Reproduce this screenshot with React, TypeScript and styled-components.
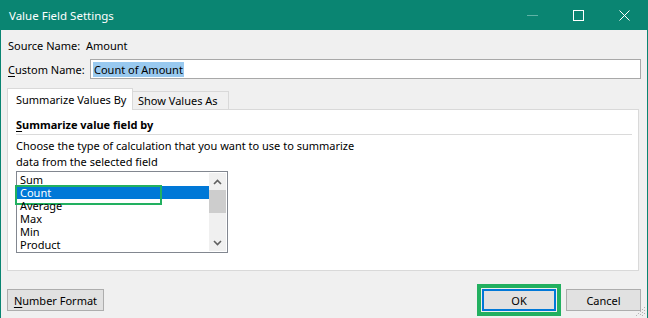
import styled, { createGlobalStyle } from "styled-components";

const TEAL = "#0a8572";
const GREEN = "#22b060";

const GlobalStyle = createGlobalStyle`
  html, body { margin: 0; padding: 0; background: #f0f0f0; }
  body {
    font-family: "Noto Sans", "Open Sans", sans-serif;
    font-size: 11px;
    color: #000;
  }
  * { box-sizing: border-box; }
`;

const Window = styled.div`
  position: relative;
  width: 648px;
  height: 318px;
  display: flex;
  flex-direction: column;
  background: #f0f0f0;
  border-left: 1px solid ${TEAL};
  border-right: 1px solid ${TEAL};
  overflow: hidden;
`;

const TitleBar = styled.div`
  height: 30px;
  flex: none;
  display: flex;
  align-items: center;
  padding-left: 8px;
  background: ${TEAL};
  color: #fff;
  font-size: 11.5px;
`;

const Controls = styled.div`
  margin-left: auto;
  display: flex;
  height: 100%;
`;

const CtrlButton = styled.div`
  width: 46px;
  height: 100%;
  display: flex;
  align-items: center;
  justify-content: center;
`;

const Body = styled.div`
  flex: 1;
  display: flex;
  flex-direction: column;
  padding: 0 6px;
`;

const Row = styled.div<{ top: number; h: number }>`
  display: flex;
  align-items: center;
  height: ${({ h }) => h}px;
  margin-top: ${({ top }) => top}px;
`;

const Label = styled.span<{ w: number }>`
  width: ${({ w }) => w}px;
  padding-left: 1px;
  flex: none;
  white-space: nowrap;
`;

const Key = styled.span`
  text-decoration: underline;
  text-underline-offset: 2px;
`;

const TextInput = styled.div`
  flex: 1;
  height: 20px;
  display: flex;
  align-items: center;
  padding-left: 2px;
  background: #fff;
  border: 1px solid #a8a8a8;
`;

const Selected = styled.span`
  background: #99c9ef;
  line-height: 15px;
  padding: 0 1px;
`;

const TabStrip = styled.div`
  display: flex;
  align-items: flex-end;
  height: 22px;
  margin-top: 9px;
  margin-bottom: -1px;
`;

const Tab = styled.div<{ active?: boolean }>`
  position: relative;
  z-index: 1;
  display: flex;
  align-items: center;
  white-space: nowrap;
  border: 1px solid #d9d9d9;
  ${({ active }) =>
    active
      ? `width: 126px; height: 22px; padding-left: 8px; background: #fff; border-bottom: none;`
      : `width: 96px; height: 19px; padding-left: 5px; background: #f0f0f0; border-left: none;`}
`;

const Panel = styled.div`
  height: 162px;
  margin-right: 2px;
  display: flex;
  flex-direction: column;
  padding: 0 6px 0 8px;
  background: #fff;
  border: 1px solid #d9d9d9;
`;

const Heading = styled.div`
  height: 16px;
  margin-top: 7px;
  line-height: 16px;
  font-weight: 700;
`;

const Separator = styled.div`
  height: 1px;
  margin-top: 1px;
  background: #dadada;
`;

const Description = styled.div`
  margin-top: 3px;
  line-height: 16px;
`;

const ListBox = styled.div`
  width: 212px;
  height: 82px;
  margin-top: 1px;
  display: flex;
  background: #fff;
  border: 1px solid #828790;
`;

const Items = styled.div`
  flex: 1;
  padding-top: 1px;
`;

const Item = styled.div<{ selected?: boolean }>`
  position: relative;
  height: 13px;
  line-height: 13px;
  padding-left: 3px;
  ${({ selected }) =>
    selected &&
    `
    background: #0078d7;
    color: #fff;
    &::after {
      content: "";
      position: absolute;
      left: -2px;
      top: -1px;
      width: 143px;
      height: 16px;
      border: 2px solid ${GREEN};
    }
  `}
`;

const ScrollBar = styled.div`
  width: 17px;
  margin: 1px 1px 1px 0;
  display: flex;
  flex-direction: column;
  background: #f0f0f0;
`;

const Arrow = styled.div`
  height: 17px;
  display: flex;
  align-items: center;
  justify-content: center;
`;

const Thumb = styled.div`
  height: 23px;
  background: #cdcdcd;
`;

const Track = styled.div`
  flex: 1;
`;

const Footer = styled.div`
  display: flex;
  gap: 10px;
  margin-top: 18px;
`;

const Button = styled.div<{ w: number; primary?: boolean }>`
  position: relative;
  width: ${({ w }) => w}px;
  height: 22px;
  display: flex;
  align-items: center;
  justify-content: center;
  background: #e1e1e1;
  border: ${({ primary }) => (primary ? "2px solid #0078d7" : "1px solid #adadad")};
  ${({ primary }) =>
    primary && `outline: 4px solid ${GREEN}; outline-offset: 1px;`}
`;

const Spacer = styled.div`
  flex: 1;
`;

const Grip = styled.svg`
  position: absolute;
  right: 1px;
  bottom: 1px;
`;

const Chevron = ({ up }: { up?: boolean }) => (
  <svg width="9" height="6" viewBox="0 0 9 6">
    <path
      d={up ? "M1 5 L4.5 1.5 L8 5" : "M1 1 L4.5 4.5 L8 1"}
      fill="none"
      stroke="#606060"
      strokeWidth="1.6"
    />
  </svg>
);

const items = ["Sum", "Count", "Average", "Max", "Min", "Product"];

export default function App() {
  return (
    <>
      <GlobalStyle />
      <Window>
        <TitleBar>
          Value Field Settings
          <Controls>
            <CtrlButton>
              <svg width="11" height="11" viewBox="0 0 11 11">
                <path d="M0 5.5 H11" stroke="#5fb3a6" strokeWidth="1" />
              </svg>
            </CtrlButton>
            <CtrlButton>
              <svg width="11" height="11" viewBox="0 0 11 11">
                <rect x="0.5" y="0.5" width="10" height="10" fill="none" stroke="#fff" strokeWidth="1" />
              </svg>
            </CtrlButton>
            <CtrlButton>
              <svg width="11" height="11" viewBox="0 0 11 11">
                <path d="M0.5 0.5 L10.5 10.5 M10.5 0.5 L0.5 10.5" stroke="#fff" strokeWidth="1" />
              </svg>
            </CtrlButton>
          </Controls>
        </TitleBar>
        <Body>
          <Row top={7} h={16}>
            <Label w={79}>Source Name:</Label>
            <span>Amount</span>
          </Row>
          <Row top={6} h={20}>
            <Label w={83}>
              <Key>C</Key>ustom Name:
            </Label>
            <TextInput>
              <Selected>Count of Amount</Selected>
            </TextInput>
          </Row>
          <TabStrip>
            <Tab active>Summarize Values By</Tab>
            <Tab>Show Values As</Tab>
          </TabStrip>
          <Panel>
            <Heading>
              <Key>S</Key>ummarize value field by
            </Heading>
            <Separator />
            <Description>
              Choose the type of calculation that you want to use to summarize
              <br />
              data from the selected field
            </Description>
            <ListBox>
              <Items>
                {items.map((it) => (
                  <Item key={it} selected={it === "Count"}>
                    {it}
                  </Item>
                ))}
              </Items>
              <ScrollBar>
                <Arrow>
                  <Chevron up />
                </Arrow>
                <Thumb />
                <Track />
                <Arrow>
                  <Chevron />
                </Arrow>
              </ScrollBar>
            </ListBox>
          </Panel>
          <Footer>
            <Button w={97}>
              <span>
                <Key>N</Key>umber Format
              </span>
            </Button>
            <Spacer />
            <Button w={74} primary>
              OK
            </Button>
            <Button w={75}>Cancel</Button>
          </Footer>
        </Body>
        <Grip width="11" height="11" viewBox="0 0 11 11">
          <path d="M10 4 L4 10 M10 7 L7 10 M10 1 L1 10" stroke="#b0b0b0" strokeWidth="1" strokeDasharray="1.4 1.4" />
        </Grip>
      </Window>
    </>
  );
}
